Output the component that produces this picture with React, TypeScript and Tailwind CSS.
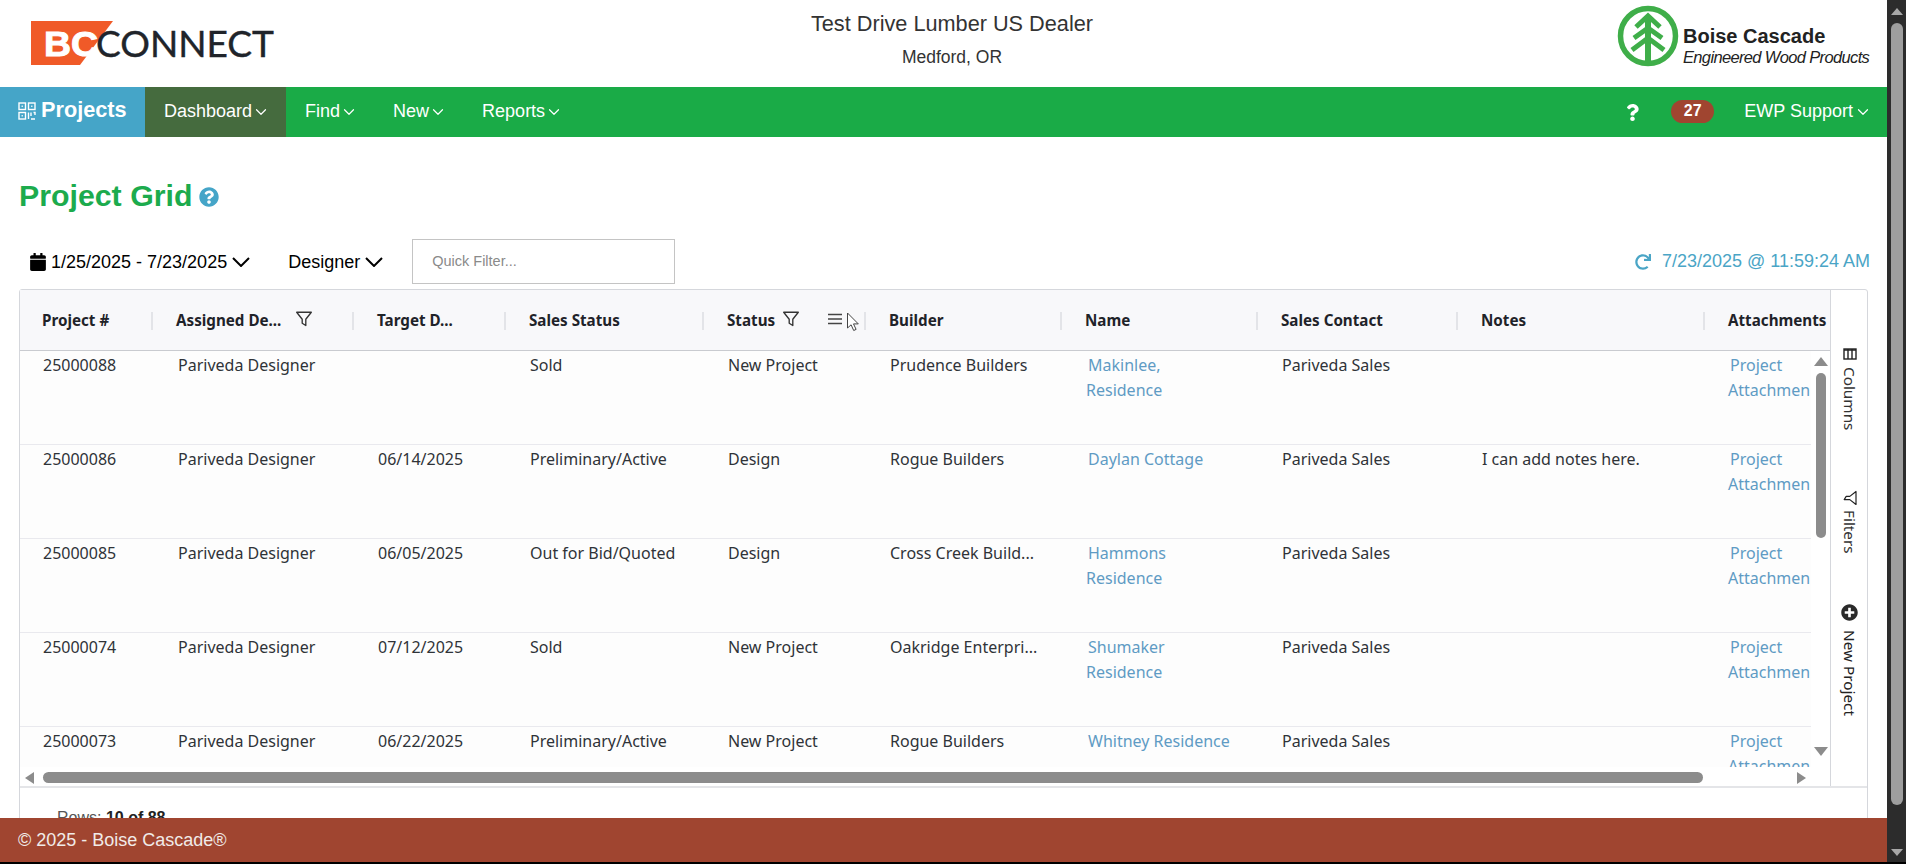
import React from "react";
import { ChevronDown } from "lucide-react";
import { FaCalendar, FaQuestionCircle, FaQuestion, FaRedo, FaPlusCircle } from "react-icons/fa";

const cols = [
  { label: "Project #", cls: "w-[135px] pl-[22px]" },
  { label: "Assigned De...", cls: "w-[201px] pl-[21px]", filter: "ml-[14px]" },
  { label: "Target D...", cls: "w-[152px] pl-[21px]" },
  { label: "Sales Status", cls: "w-[198px] pl-[21px]" },
  { label: "Status", cls: "w-[162px] pl-[21px]", filter: "ml-[7px]", menu: true },
  { label: "Builder", cls: "w-[196px] pl-[21px]" },
  { label: "Name", cls: "w-[196px] pl-[21px]" },
  { label: "Sales Contact", cls: "w-[200px] pl-[21px]" },
  { label: "Notes", cls: "w-[247px] pl-[21px]" },
  { label: "Attachments", cls: "w-[190px] pl-[21px]", last: true },
];

const widths = ["w-[135px]", "w-[201px]", "w-[152px]", "w-[198px]", "w-[162px]", "w-[196px]", "w-[196px]", "w-[200px]", "w-[247px]"];

const rows = [
  ["25000088", "Pariveda Designer", "", "Sold", "New Project", "Prudence Builders", ["Makinlee,", "Residence"], "Pariveda Sales", ""],
  ["25000086", "Pariveda Designer", "06/14/2025", "Preliminary/Active", "Design", "Rogue Builders", ["Daylan Cottage"], "Pariveda Sales", "I can add notes here."],
  ["25000085", "Pariveda Designer", "06/05/2025", "Out for Bid/Quoted", "Design", "Cross Creek Build...", ["Hammons", "Residence"], "Pariveda Sales", ""],
  ["25000074", "Pariveda Designer", "07/12/2025", "Sold", "New Project", "Oakridge Enterpri...", ["Shumaker", "Residence"], "Pariveda Sales", ""],
  ["25000073", "Pariveda Designer", "06/22/2025", "Preliminary/Active", "New Project", "Rogue Builders", ["Whitney Residence"], "Pariveda Sales", ""],
];

function Funnel({ className }: { className?: string }) {
  return (
    <svg viewBox="0 0 16 16" className={className} fill="none" stroke="currentColor" strokeWidth="1.2" strokeLinejoin="round">
      <path d="M1.5 2h13L9.6 8.2v5.6l-3.2-2V8.2z" />
    </svg>
  );
}

function BigChevron({ className }: { className?: string }) {
  return (
    <svg viewBox="0 0 18 10" className={`w-[18px] h-[10px] ${className ?? ""}`} fill="none" stroke="currentColor" strokeWidth="2">
      <path d="M1 1l8 8 8-8" />
    </svg>
  );
}

function NavItem({ label, active }: { label: string; active?: boolean }) {
  return (
    <div className={`flex items-center pl-[19px] pr-[16px] pb-[2px] h-full text-[18px] text-white ${active ? "bg-[#456b3e]" : ""}`}>
      <span>{label}</span>
      <ChevronDown className="w-[18px] h-[18px] mt-[2px]" strokeWidth={1.6} />
    </div>
  );
}

function Triangle({ className }: { className: string }) {
  return <div className={className} />;
}

export default function App() {
  return (
    <div className="w-[1906px] h-[864px] overflow-hidden bg-black flex flex-col font-['Liberation_Sans',Arial,sans-serif]">
      <div className="flex h-[862px]">
        <div className="w-[1887px] flex flex-col bg-white">
          {/* Top header */}
          <header className="h-[87px] shrink-0 flex items-start justify-between">
            <svg width="290" height="87" viewBox="0 0 290 87" className="shrink-0">
              <polygon points="31,21 113,21 80,65 31,65" fill="#f05a28" />
              <text x="44" y="56" fontFamily="'Liberation Sans',sans-serif" fontWeight="700" fontSize="35" fill="#ffffff" stroke="#ffffff" strokeWidth="1" textLength="54" lengthAdjust="spacingAndGlyphs">BC</text>
              <text x="96" y="57" fontFamily="Lato,'Liberation Sans',sans-serif" fontWeight="400" fontSize="37" fill="#20242a" stroke="#20242a" strokeWidth="0.4" textLength="178" lengthAdjust="spacingAndGlyphs">CONNECT</text>
            </svg>
            <div className="flex flex-col items-center text-[#333] pt-[11px] mr-[3px]">
              <div className="text-[21.7px] leading-[26px]">Test Drive Lumber US Dealer</div>
              <div className="text-[17.5px] leading-[22px] mt-[9px]">Medford, OR</div>
            </div>
            <div className="flex items-start pt-[5px] pr-[18px]">
              <svg width="62" height="62" viewBox="0 0 62 62" className="shrink-0">
                <circle cx="31" cy="31" r="27.5" fill="none" stroke="#3fae49" strokeWidth="5.5" />
                <g fill="none" stroke="#3fae49" strokeWidth="5">
                  <path d="M31 12v46" strokeWidth="6" />
                  <path d="M19 22l12-11 12 11" />
                  <path d="M17 33l14-10 14 10" />
                  <path d="M15 45l16-12 16 12" />
                </g>
              </svg>
              <div className="ml-[4px] pt-[20px] text-[#222] w-[186px] whitespace-nowrap">
                <div className="font-bold text-[20px] leading-[22px]">Boise Cascade</div>
                <div className="italic text-[16.5px] leading-[20px] tracking-[-0.65px]">Engineered Wood Products</div>
              </div>
            </div>
          </header>

          {/* Nav */}
          <nav className="h-[50px] shrink-0 bg-[#1aab47] flex items-center">
            <div className="w-[145px] h-full bg-[#45a5c8] flex items-center text-white font-bold text-[21.7px] pl-[18px] gap-[5px] pb-[3px]">
              <svg viewBox="0 0 18 18" className="w-[18px] h-[18px]" fill="none" stroke="#fff" strokeWidth="1.4">
                <rect x="1" y="1" width="6.5" height="6.5" />
                <rect x="10.5" y="1" width="6.5" height="6.5" />
                <rect x="1" y="10.5" width="6.5" height="6.5" />
                <path d="M3.6 4.2h1.2M13.2 4.2h1.2M3.6 13.8h1.2" />
                <path d="M10.5 10.5v6.5M13 10.5v3.5M15.5 10.5H17v2.5M13 17h4" />
              </svg>
              <span>Projects</span>
            </div>
            <NavItem label="Dashboard" active />
            <NavItem label="Find" />
            <NavItem label="New" />
            <NavItem label="Reports" />
            <div className="ml-auto flex items-center h-full pr-[15px] pb-[2px]">
              <FaQuestion className="text-white w-[13px] h-[17px] mr-[32px] mt-[2px]" />
              <div className="w-[43px] h-[23px] rounded-full bg-[#a04530] text-white font-bold text-[16px] flex items-center justify-center mr-[30px]">27</div>
              <span className="text-white text-[18px]">EWP Support</span>
              <ChevronDown className="w-[18px] h-[18px] text-white ml-[1px] mt-[2px]" strokeWidth={1.6} />
            </div>
          </nav>

          {/* Main */}
          <main className="flex-1 min-h-0 overflow-hidden px-[19px]">
            <div className="flex items-center pt-[41px] h-[76px]">
              <h1 className="text-[#1cab4d] font-bold text-[30.3px] leading-[36px]">Project Grid</h1>
              <FaQuestionCircle className="text-[#45a5c8] w-[20px] h-[20px] ml-[7px] mt-[2px]" />
            </div>
            <div className="flex items-center h-[45px] mt-[26px] text-[18px] text-black">
              <FaCalendar className="ml-[11px] w-[16px] h-[18px]" />
              <span className="ml-[5px] pt-[1px]">1/25/2025 - 7/23/2025</span>
              <BigChevron className="ml-[5px]" />
              <span className="ml-[38px] pt-[1px]">Designer</span>
              <BigChevron className="ml-[5px]" />
              <div className="ml-[29px] w-[263px] h-[45px] border border-[#c4c4c4] flex items-center pl-[19px] text-[14.5px] text-[#8a8a8a]">Quick Filter...</div>
              <div className="ml-auto flex items-center text-[#4aa5c6] mr-[-2px]">
                <FaRedo className="w-[16px] h-[16px] mr-[11px]" />
                <span>7/23/2025 @ 11:59:24 AM</span>
              </div>
            </div>

            {/* Grid card */}
            <div className="mt-[5px] border border-[#d5d7dc] rounded-t-[3px] font-['Noto_Sans',sans-serif] text-[16px] text-[#2f3338]">
              <div className="flex h-[498px] border-b-2 border-[#e4e5e8]">
                <div className="w-[1810px] shrink-0 flex flex-col min-w-0">
                  {/* Header */}
                  <div className="flex h-[61px] shrink-0 bg-[#f8f8fa] border-b border-[#c9cbd0] overflow-hidden">
                    {cols.map((c) => (
                      <div key={c.label} className={`${c.cls} shrink-0 flex items-center font-bold text-[15.2px] text-[#1f2329] whitespace-nowrap pt-[1px]`}>
                        <span>{c.label}</span>
                        {c.filter && <Funnel className={`w-[18px] h-[18px] mb-[4px] text-[#333] ${c.filter}`} />}
                        {c.menu && (
                          <svg viewBox="0 0 14 12" className="w-[14px] h-[12px] ml-[28px] mb-[3px] text-[#444]" fill="none" stroke="currentColor" strokeWidth="1.3">
                            <path d="M0 1.5h14M0 6h14M0 10.5h14" />
                          </svg>
                        )}
                        {c.menu && (
                          <svg viewBox="0 0 14 20" className="w-[14px] h-[20px] ml-[4px] mt-[3px]" fill="#fff" stroke="#444" strokeWidth="1">
                            <path d="M1.5 1v15l3.6-3.2 2.6 5.7 2.4-1.1-2.6-5.5h4.8z" />
                          </svg>
                        )}
                        {!c.last && <div className="ml-auto mr-[2px] w-[2px] h-[18px] bg-[#e3e4e8] shrink-0" />}
                      </div>
                    ))}
                  </div>
                  {/* Body */}
                  <div className="flex-1 min-h-0 flex">
                    <div className="w-[1791px] shrink-0 overflow-hidden">
                      {rows.map((r) => (
                        <div key={r[0] as string} className="flex h-[94px] w-[1791px] border-b border-[#e9e9ee] bg-[#fdfdfd] leading-[25px] overflow-hidden shrink-0">
                          {widths.map((w, i) => (
                            <div key={i} className={`${w} shrink-0 pt-[2px] ${i < 2 ? "pl-[23px]" : "pl-[22px]"} ${i === 6 ? "text-[#5f9bc4]" : ""}`}>
                              {i === 6 ? (
                                <div>
                                  {(r[6] as string[]).map((t, k) => (
                                    <div key={t} className={k === 0 ? "indent-[2px]" : ""}>{t}</div>
                                  ))}
                                </div>
                              ) : (
                                <span>{r[i] as string}</span>
                              )}
                            </div>
                          ))}
                          <div className="w-[104px] shrink-0 pl-[21px] pt-[2px] text-[#5f9bc4] whitespace-nowrap overflow-hidden">
                            <div className="indent-[2px]">Project</div>
                            <div>Attachmen</div>
                          </div>
                        </div>
                      ))}
                    </div>
                    {/* Vertical scrollbar */}
                    <div className="w-[19px] shrink-0 flex flex-col items-center pt-[6px] bg-white">
                      <Triangle className="w-0 h-0 border-x-[7px] border-x-transparent border-b-[9px] border-b-[#8c8c8c]" />
                      <div className="w-[10px] h-[165px] mt-[7px] rounded-full bg-[#8c8c8c]" />
                      <Triangle className="w-0 h-0 mt-auto mb-[11px] border-x-[7px] border-x-transparent border-t-[9px] border-t-[#8c8c8c]" />
                    </div>
                  </div>
                  {/* Horizontal scrollbar */}
                  <div className="h-[19px] shrink-0 flex items-center bg-white pl-[5px] pr-[24px] pt-[2px]">
                    <Triangle className="w-0 h-0 border-y-[6px] border-y-transparent border-r-[9px] border-r-[#8c8c8c]" />
                    <div className="w-[1660px] h-[11px] ml-[9px] rounded-full bg-[#8c8c8c]" />
                    <Triangle className="w-0 h-0 ml-auto border-y-[6px] border-y-transparent border-l-[9px] border-l-[#8c8c8c]" />
                  </div>
                </div>
                {/* Side rail */}
                <div className="w-[37px] shrink-0 border-l border-[#d5d7dc] flex flex-col items-center pt-[58px] pl-[1px] text-[15.3px] text-[#333]">
                  <div className="flex flex-col items-center">
                    <svg viewBox="0 0 14 12" className="w-[14px] h-[12px]" fill="none" stroke="#222" strokeWidth="1.4">
                      <rect x="1" y="1" width="12" height="10" />
                      <path d="M1 2h12M5 1v10M9 1v10" />
                    </svg>
                    <span className="[writing-mode:vertical-rl] mt-[7px] leading-[20px]">Columns</span>
                  </div>
                  <div className="flex flex-col items-center mt-[60px]">
                    <Funnel className="w-[16px] h-[16px] rotate-90 text-[#222]" />
                    <span className="[writing-mode:vertical-rl] mt-[4px] leading-[20px]">Filters</span>
                  </div>
                  <div className="flex flex-col items-center mt-[50px]">
                    <FaPlusCircle className="w-[17px] h-[17px] text-[#2a2a2a]" />
                    <span className="[writing-mode:vertical-rl] mt-[9px] leading-[20px] text-[#222]">New Project</span>
                  </div>
                </div>
              </div>
              <div className="h-[60px] pl-[37px] pt-[19px] font-['Liberation_Sans',sans-serif] text-[16px] leading-[22px] text-[#555]">
                Rows: <b className="text-[#222]">10 of 88</b>
              </div>
            </div>
          </main>

          {/* Footer */}
          <footer className="h-[44px] shrink-0 bg-[#a04530] text-[#f1ebe8] text-[18px] flex items-center pl-[18px]">© 2025 - Boise Cascade®</footer>
        </div>

        {/* Page scrollbar */}
        <div className="w-[19px] shrink-0 bg-[#2c2c2c] flex flex-col items-center pt-[8px]">
          <Triangle className="w-0 h-0 border-x-[6px] border-x-transparent border-b-[7px] border-b-[#a8a8a8]" />
          <div className="w-[12px] h-[782px] mt-[8px] rounded-full bg-[#9e9e9e]" />
          <Triangle className="w-0 h-0 mt-auto mb-[6px] border-x-[6px] border-x-transparent border-t-[7px] border-t-[#a8a8a8]" />
        </div>
      </div>
    </div>
  );
}
